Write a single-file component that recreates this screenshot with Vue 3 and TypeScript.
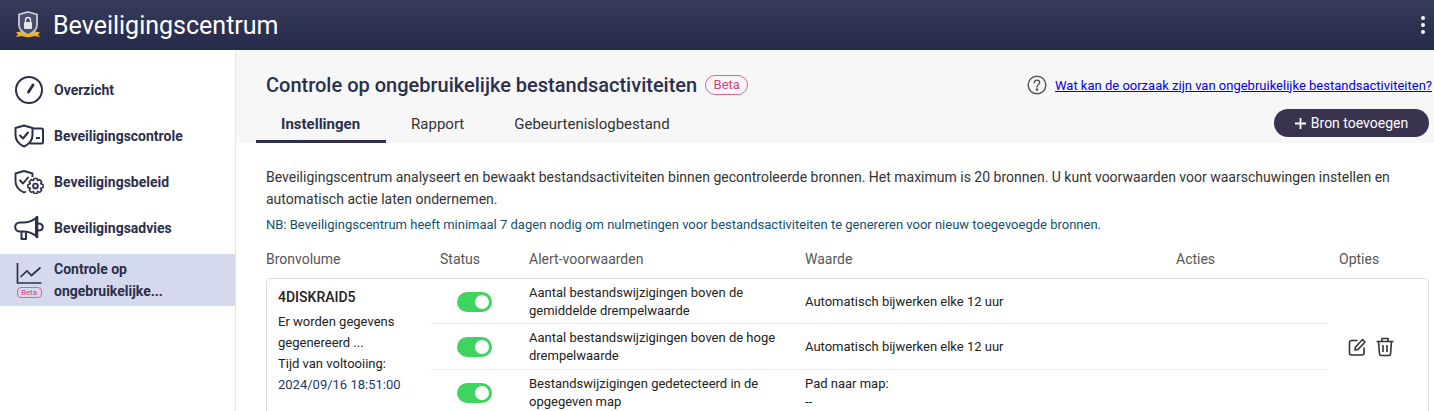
<template>
  <div class="app">
    <header class="topbar">
      <svg class="logo" width="28" height="30" viewBox="0 0 28 30">
        <path d="M14 2 L23 4.5 V15 C23 20 19 23 14 25 C9 23 5 20 5 15 V4.5 Z" fill="#4a5068" stroke="#c9ccd4" stroke-width="1.8" />
        <rect x="10" y="12" width="8" height="7" rx="1" fill="#e6e7ea" />
        <path d="M11.5 12 V10 a2.5 2.5 0 0 1 5 0 V12" fill="none" stroke="#e6e7ea" stroke-width="1.3" />
        <path d="M2 22.5 L6.5 21.5 C11 24.5 17 24.5 21.5 21.5 L26 22.5 L24 24.5 L26 27 L20.5 26 C16 27.5 12 27.5 7.5 26 L2 27 L4 24.5 Z" fill="#f0b429" />
      </svg>
      <span class="app-title">Beveiligingscentrum</span>
      <div class="kebab"><i></i><i></i><i></i></div>
    </header>

    <div class="body">
      <aside class="sidebar">
        <div v-for="item in navItems" :key="item.id" class="nav-item" :class="{ active: item.active }">
          <div class="nav-icon">
            <svg v-if="item.id === 'overview'" width="30" height="30" viewBox="0 0 30 30" fill="none" stroke="#2b2f4b">
              <circle cx="15" cy="15" r="13" stroke-width="2" />
              <path d="M14.5 17 L19 10" stroke-width="2.8" stroke-linecap="round" />
            </svg>
            <svg v-else-if="item.id === 'check'" width="30" height="24" viewBox="0 0 30 24" fill="none" stroke="#2b2f4b" stroke-width="2">
              <path d="M10 1.5 L18.5 4 V11 C18.5 17 14.5 20.5 10 22.5 C5.5 20.5 1.5 17 1.5 11 V4 Z" stroke-linejoin="round" />
              <path d="M6 11.5 L9 14.5 L14 8.5" stroke-linecap="round" stroke-linejoin="round" />
              <path d="M19 4.5 H27.5 a1.5 1.5 0 0 1 1.5 1.5 V18 a1.5 1.5 0 0 1 -1.5 1.5 H16" stroke-linejoin="round" />
              <path d="M22 14 H26" />
            </svg>
            <svg v-else-if="item.id === 'policy'" width="30" height="24" viewBox="0 0 30 24" fill="none" stroke="#2b2f4b" stroke-width="1.9">
              <path d="M18.5 7 V3.5 L10 1 L1.5 3.5 V11 C1.5 17 5.5 20.5 10 22.5 L12 21.5" stroke-linejoin="round" />
              <path d="M6 10.5 L9 13.5 L14 7.5" stroke-linecap="round" stroke-linejoin="round" />
              <circle cx="21.5" cy="16" r="2.4" />
              <path d="M20 8.5 H23 L23.6 10.6 L25.6 9.6 L27.7 11.7 L26.7 13.7 L29 14.5 V17.5 L26.7 18.3 L27.7 20.3 L25.6 22.4 L23.6 21.4 L23 23.5 H20 L19.4 21.4 L17.4 22.4 L15.3 20.3 L16.3 18.3 L14 17.5 V14.5 L16.3 13.7 L15.3 11.7 L17.4 9.6 L19.4 10.6 Z" stroke-width="1.6" stroke-linejoin="round" />
            </svg>
            <svg v-else-if="item.id === 'advice'" width="30" height="24" viewBox="0 0 30 24" fill="none" stroke="#2b2f4b" stroke-width="2">
              <path d="M22 2 C18 5.5 14 6.5 9 6.5 H6 C3 6.5 1.2 8.5 1.2 11 C1.2 13.5 3 15.5 6 15.5 H9 C14 15.5 18 16.5 22 20 Z" stroke-linejoin="round" />
              <path d="M23 1 V21" stroke-width="2.6" stroke-linecap="round" />
              <path d="M24 7.5 C27 7.5 28.8 9 28.8 11 C28.8 13 27 14.5 24 14.5" />
              <path d="M7.5 16 V23 H12 V16.5" stroke-linejoin="round" />
            </svg>
            <template v-else>
              <svg width="26" height="21" viewBox="0 0 26 21" fill="none" stroke="#2b2f4b">
                <path d="M1.5 0 V20 H25.5" stroke-width="1.7" />
                <path d="M4.5 14 L11 8 L15.5 12.5 L24.5 4.5" stroke-width="1.7" />
              </svg>
              <span class="mini-beta">Beta</span>
            </template>
          </div>
          <span class="nav-label">{{ item.label }}</span>
        </div>
      </aside>

      <main class="main">
        <div class="head-row">
          <div class="page-title">
            <h1>Controle op ongebruikelijke bestandsactiviteiten</h1>
            <span class="beta">Beta</span>
          </div>
          <div class="help">
            <svg width="20" height="20" viewBox="0 0 20 20" fill="none" stroke="#555" stroke-width="1.4">
              <circle cx="10" cy="10" r="8.8" />
              <path d="M7.3 7.8 C7.3 6.2 8.6 5.1 10 5.1 C11.5 5.1 12.7 6.2 12.7 7.6 C12.7 9.5 10 9.6 10 12" stroke-linecap="round" />
              <circle cx="10" cy="14.6" r="0.6" fill="#555" />
            </svg>
            <a href="#">Wat kan de oorzaak zijn van ongebruikelijke bestandsactiviteiten?</a>
          </div>
        </div>

        <div class="tabs-row">
          <div class="tabs">
            <div v-for="t in tabs" :key="t" class="tab" :class="{ on: t === activeTab }">{{ t }}</div>
          </div>
          <button class="add-btn">
            <svg width="11" height="11" viewBox="0 0 11 11" stroke="#fff" stroke-width="1.8"><path d="M5.5 0 V11 M0 5.5 H11" /></svg>
            Bron toevoegen
          </button>
        </div>

        <section class="content">
          <p class="intro">Beveiligingscentrum analyseert en bewaakt bestandsactiviteiten binnen gecontroleerde bronnen. Het maximum is 20 bronnen. U kunt voorwaarden voor waarschuwingen instellen en automatisch actie laten ondernemen.</p>
          <p class="note">NB: Beveiligingscentrum heeft minimaal 7 dagen nodig om nulmetingen voor bestandsactiviteiten te genereren voor nieuw toegevoegde bronnen.</p>

          <div class="grid table-head">
            <span>Bronvolume</span>
            <span>Status</span>
            <span>Alert-voorwaarden</span>
            <span>Waarde</span>
            <span>Acties</span>
            <span>Opties</span>
          </div>

          <div class="card">
            <div class="source">
              <div class="vol">4DISKRAID5</div>
              <div>Er worden gegevens</div>
              <div>gegenereerd ...</div>
              <div>Tijd van voltooiing:</div>
              <div class="date">2024/09/16 18:51:00</div>
            </div>
            <div class="rules">
              <div v-for="r in rules" :key="r.cond" class="rule">
                <div class="toggle-cell"><span class="toggle"><i></i></span></div>
                <div class="cond">{{ r.cond }}</div>
                <div class="val">{{ r.val }}<template v-if="r.val2"><br />{{ r.val2 }}</template></div>
              </div>
            </div>
            <div class="options">
              <svg width="20" height="20" viewBox="0 0 20 20" fill="none" stroke="#333" stroke-width="1.6">
                <path d="M10 3.5 H4.5 a2 2 0 0 0 -2 2 V16 a2 2 0 0 0 2 2 H15 a2 2 0 0 0 2 -2 V11" stroke-linecap="round" />
                <path d="M15.5 2.5 L18 5 L11 12.5 L8 13 L8.5 10 Z" stroke-linejoin="round" />
              </svg>
              <svg width="20" height="20" viewBox="0 0 20 20" fill="none" stroke="#333" stroke-width="1.6">
                <path d="M1.5 4.5 H18.5 M7 4.5 V1.5 H13 V4.5" />
                <path d="M3.5 4.5 L4.5 17 a1.5 1.5 0 0 0 1.5 1.5 H14 a1.5 1.5 0 0 0 1.5 -1.5 L16.5 4.5" />
                <path d="M8 8 V15 M12 8 V15" />
              </svg>
            </div>
          </div>
        </section>
      </main>
    </div>
  </div>
</template>

<script setup lang="ts">
interface NavItem {
  id: string;
  label: string;
  active?: boolean;
}

const navItems: NavItem[] = [
  { id: "overview", label: "Overzicht" },
  { id: "check", label: "Beveiligingscontrole" },
  { id: "policy", label: "Beveiligingsbeleid" },
  { id: "advice", label: "Beveiligingsadvies" },
  { id: "monitor", label: "Controle op ongebruikelijke...", active: true },
];

const tabs = ["Instellingen", "Rapport", "Gebeurtenislogbestand"];
const activeTab = "Instellingen";

const rules = [
  { cond: "Aantal bestandswijzigingen boven de gemiddelde drempelwaarde", val: "Automatisch bijwerken elke 12 uur" },
  { cond: "Aantal bestandswijzigingen boven de hoge drempelwaarde", val: "Automatisch bijwerken elke 12 uur" },
  { cond: "Bestandswijzigingen gedetecteerd in de opgegeven map", val: "Pad naar map:", val2: "--" },
];
</script>

<style>
html,
body {
  margin: 0;
  height: 411px;
  overflow: hidden;
}
</style>

<style scoped>
.app {
  width: 1434px;
  height: 411px;
  overflow: hidden;
  font-family: Roboto, "Liberation Sans", sans-serif;
  color: #222;
  background: #fff;
}

.topbar {
  height: 50px;
  display: flex;
  align-items: center;
  padding-left: 14px;
  background: linear-gradient(#383c5a, #25294a);
  color: #fff;
}

.logo {
  margin-right: 11px;
}

.app-title {
  font-size: 25px;
  flex: 1;
}

.kebab {
  width: 22px;
  display: flex;
  flex-direction: column;
  align-items: center;
  gap: 3px;
}

.kebab i {
  width: 4px;
  height: 4px;
  border-radius: 50%;
  background: #fff;
}

.body {
  display: flex;
  height: 361px;
}

.sidebar {
  width: 236px;
  flex: none;
  box-sizing: border-box;
  padding-top: 17px;
  border-right: 1px solid #e6e6e6;
  background: #fff;
}

.nav-item {
  height: 46px;
  display: flex;
  align-items: center;
  padding-left: 14px;
}

.nav-item.active {
  height: 52px;
  margin-top: 3px;
  background: #d5d9ee;
}

.nav-icon {
  width: 30px;
  margin-right: 10px;
  display: flex;
  flex-direction: column;
  align-items: center;
}

.nav-label {
  width: 130px;
  font-size: 14px;
  font-weight: 700;
  line-height: 22px;
  color: #2b2f4b;
}

.mini-beta {
  box-sizing: border-box;
  width: 25px;
  height: 11px;
  margin-top: 3px;
  border: 1px solid #e3608f;
  border-radius: 4px;
  font-size: 8px;
  line-height: 9px;
  text-align: center;
  color: #d8447c;
}

.main {
  flex: 1;
  min-width: 0;
  background: #f7f7f7;
}

.head-row {
  display: flex;
  align-items: center;
  justify-content: space-between;
  height: 48px;
  padding: 2px 2px 0 30px;
  box-sizing: border-box;
  margin-top: 10px;
}

.page-title {
  display: flex;
  align-items: center;
  gap: 8px;
}

h1 {
  margin: 0;
  font-size: 20px;
  font-weight: 500;
  color: #2b2f4b;
}

.beta {
  box-sizing: border-box;
  width: 43px;
  height: 20px;
  border: 1px solid #e3608f;
  border-radius: 10px;
  font-size: 13px;
  line-height: 17px;
  text-align: center;
  color: #d8447c;
}

.help {
  display: flex;
  align-items: center;
  gap: 8px;
}

.help a {
  font-size: 13px;
  color: #0000ee;
}

.tabs-row {
  height: 35px;
  display: flex;
  align-items: flex-start;
  justify-content: space-between;
  padding: 1px 5px 0 20px;
  box-sizing: border-box;
}

.tabs {
  display: flex;
}

.tab {
  height: 34px;
  box-sizing: border-box;
  padding: 0 25px;
  font-size: 15px;
  line-height: 30px;
  color: #333;
}

.tab.on {
  padding-right: 26px;
  font-weight: 700;
  color: #2b2f4b;
  border-bottom: 3px solid #2b2f4b;
}

.add-btn {
  width: 155px;
  height: 28px;
  display: flex;
  align-items: center;
  justify-content: center;
  gap: 5px;
  border: 0;
  border-radius: 14px;
  background: #393350;
  color: #fff;
  font-family: inherit;
  font-size: 14px;
}

.content {
  height: 278px;
  padding: 0 5px 0 30px;
  box-sizing: border-box;
  background: #fff;
}

.intro {
  margin: 0;
  padding-top: 23px;
  font-size: 14px;
  line-height: 22px;
  color: #333;
}

.note {
  margin: 6px 0 0;
  font-size: 13px;
  line-height: 18px;
  color: #11516f;
}

.grid {
  display: grid;
  grid-template-columns: 174px 89px 276px 371px 163px 1fr;
}

.table-head {
  margin-top: 17px;
  height: 27px;
  font-size: 14px;
  color: #555;
}

.card {
  display: flex;
  border: 1px solid #ddd;
  border-radius: 4px;
  font-size: 13px;
  color: #222;
}

.source {
  width: 164px;
  flex: none;
  padding: 8px 0 0 11px;
  box-sizing: border-box;
  line-height: 21px;
  font-size: 13px;
}

.vol {
  font-size: 14px;
  font-weight: 500;
  margin-bottom: 3px;
}

.date {
  color: #18386e;
}

.rules {
  width: 897px;
  flex: none;
}

.rule {
  height: 46px;
  box-sizing: border-box;
  display: flex;
  align-items: center;
  border-bottom: 1px solid #ececec;
}

.rule:first-child {
  height: 45px;
  padding-top: 2px;
}

.rule:last-child {
  border-bottom: 0;
}

.toggle-cell {
  width: 98px;
  padding-left: 26px;
  box-sizing: border-box;
}

.toggle {
  display: flex;
  align-items: center;
  justify-content: flex-end;
  width: 35px;
  height: 20px;
  padding-right: 3px;
  box-sizing: border-box;
  border-radius: 10px;
  background: #3fd35f;
}

.toggle i {
  width: 14px;
  height: 14px;
  border-radius: 50%;
  background: #fff;
}

.cond {
  width: 276px;
  padding-right: 20px;
  box-sizing: border-box;
  line-height: 18px;
}

.val {
  line-height: 18px;
}

.options {
  flex: 1;
  display: flex;
  align-items: flex-start;
  gap: 8px;
  padding: 58px 0 0 19px;
}
</style>
